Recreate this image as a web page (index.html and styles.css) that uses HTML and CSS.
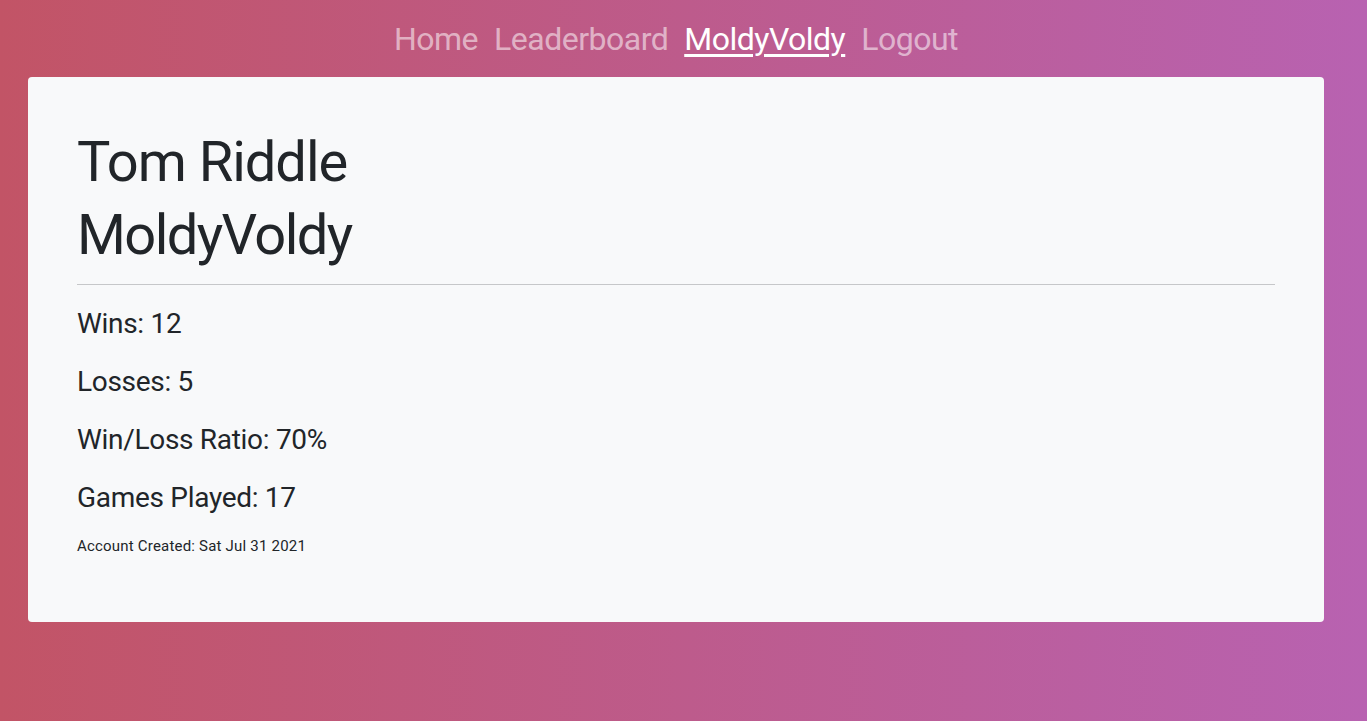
FILE: index.html
```html
<!DOCTYPE html>
<html>
<head>
<meta charset="utf-8">
<link rel="stylesheet" href="styles.css">
</head>
<body>
<nav class="nav">
  <a class="nav-link" href="#">Home</a>
  <a class="nav-link" href="#">Leaderboard</a>
  <a class="nav-link active" href="#">MoldyVoldy</a>
  <a class="nav-link" href="#">Logout</a>
</nav>
<main class="card">
  <h1 class="name">Tom Riddle</h1>
  <h1 class="name">MoldyVoldy</h1>
  <hr class="divider">
  <p class="stat">Wins: 12</p>
  <p class="stat">Losses: 5</p>
  <p class="stat">Win/Loss Ratio: 70%</p>
  <p class="stat last">Games Played: 17</p>
  <p class="created">Account Created: Sat Jul 31 2021</p>
</main>
</body>
</html>
```
FILE: styles.css
```css
html, body {
  margin: 0;
  padding: 0;
}
body {
  min-height: 721px;
  box-sizing: border-box;
  padding-right: 15px;
  background: linear-gradient(90deg, #c25466 0%, #b862b1 100%);
  font-family: Roboto, "Liberation Sans", sans-serif;
  color: #212529;
  overflow: hidden;
}
.nav {
  display: flex;
  justify-content: center;
  gap: 16px;
  padding-top: 20px;
  height: 38px;
}
.nav-link {
  font-size: 32px;
  line-height: 38px;
  color: rgba(255, 255, 255, 0.55);
  text-decoration: none;
  letter-spacing: -0.5px;
}
.nav-link.active {
  color: #fff;
  text-decoration: underline;
  text-underline-offset: 4px;
  text-decoration-thickness: 3px;
}
.card {
  display: block;
  margin: 19px 28px 0 28px;
  background: #f8f9fa;
  border-radius: 4px;
  padding: 52px 49px 65px 49px;
}
.name {
  margin: 0 0 6px 0;
  font-size: 56px;
  line-height: 67px;
  font-weight: 400;
  letter-spacing: -1px;
}
.name + .name {
  margin-bottom: 0;
  letter-spacing: -1.6px;
}
.divider {
  margin: 15px 0 22px 0;
  border: 0;
  border-top: 1px solid #c6c7c9;
  height: 0;
}
.stat {
  margin: 0 0 24px 0;
  font-size: 28px;
  line-height: 34px;
  letter-spacing: -0.3px;
}
.stat.last {
  margin-bottom: 21px;
}
.created {
  margin: 0;
  font-size: 15px;
  line-height: 21px;
  letter-spacing: 0.2px;
}
```
